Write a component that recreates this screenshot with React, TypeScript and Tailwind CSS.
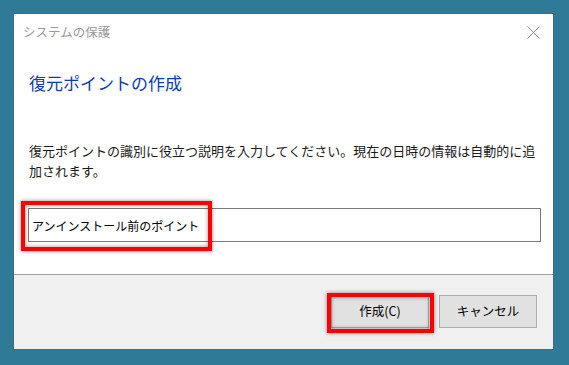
import React from 'react';

const jp = { fontFamily: '"Noto Sans CJK JP", "Noto Sans", sans-serif' };

// red annotation frame drawn over the screenshot
const Mark: React.FC<{ className: string }> = ({ className }) => (
  <div
    className={`absolute border-[4px] border-[#ff0000] shadow-[0_0_4px_rgba(0,0,0,0.45),inset_0_0_4px_rgba(0,0,0,0.45)] pointer-events-none ${className}`}
  />
);

const App: React.FC = () => {
  return (
    <div className="w-[569px] h-[365px] bg-[#2e7a97] pt-[13px] pl-[13px] overflow-hidden" style={jp}>
      <div className="relative w-[541px] h-[337px] bg-white border border-[#46697a] flex flex-col">
        {/* title bar */}
        <div className="h-[36px] flex items-center justify-between pl-[9px] pr-[13px]">
          <span className="text-[12.5px] text-[#9a9a9a] leading-none">システムの保護</span>
          <svg width="13" height="13" viewBox="0 0 13 13" className="text-[#8a8a8a]">
            <path d="M0.5 0.5 L12.5 12.5 M12.5 0.5 L0.5 12.5" stroke="currentColor" strokeWidth="1" />
          </svg>
        </div>

        <h1 className="mt-[21px] pl-[15px] text-[17px] leading-[24px] text-[#0b3cae] font-normal">
          復元ポイントの作成
        </h1>

        <p className="mt-[46px] pl-[15px] text-[13px] leading-[20px] text-[#1a1a1a]">
          復元ポイントの識別に役立つ説明を入力してください。現在の日時の情報は自動的に追
          <br />
          加されます。
        </p>

        <div className="mt-[27px] ml-[14px] w-[513px] h-[34px] border border-[#7a7a7a] pl-[3px] pt-[3px]">
          <span className="text-[12px] leading-[20px] text-black">アンインストール前のポイント</span>
        </div>

        {/* footer */}
        <div className="mt-auto h-[75px] border-t border-[#a0a0a0] bg-[#f0f0f0] flex justify-end items-start gap-[10px] pt-[20px] pr-[16px]">
          <button className="w-[98px] h-[33px] bg-[#e1e1e1] border border-[#adadad] text-[12.5px] text-black">
            作成(C)
          </button>
          <button className="w-[98px] h-[33px] bg-[#e1e1e1] border border-[#adadad] text-[12.5px] text-black">
            キャンセル
          </button>
        </div>

        <Mark className="left-[7px] top-[187px] w-[191px] h-[50px]" />
        <Mark className="left-[313px] top-[279px] w-[107px] h-[40px]" />
      </div>
    </div>
  );
};

export default App;
